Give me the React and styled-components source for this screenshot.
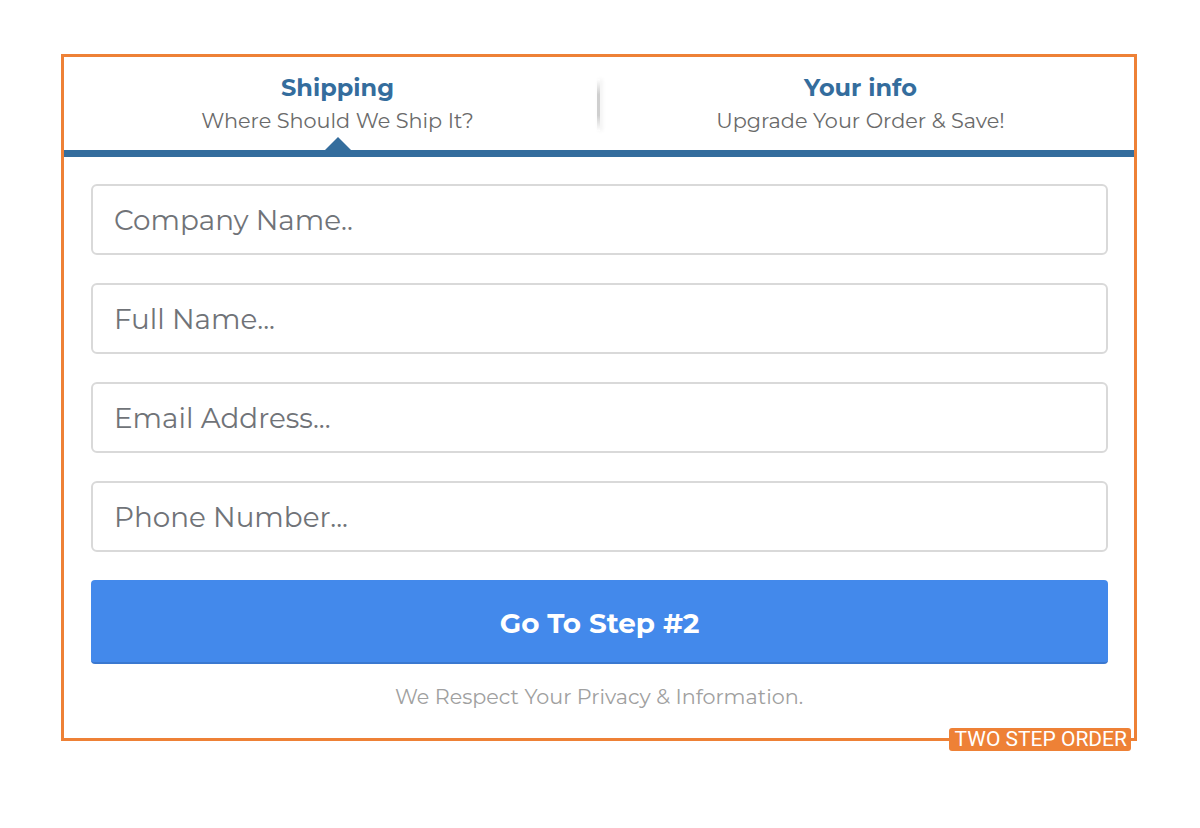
import React from 'react';
import styled, { createGlobalStyle } from 'styled-components';

const GlobalStyle = createGlobalStyle`
    html, body {
        margin: 0;
        padding: 0;
        background: #ffffff;
    }
    body {
        font-family: 'Montserrat', 'DejaVu Sans', 'Noto Sans', sans-serif;
    }
`;

const Page = styled.div`
    width: 1200px;
    height: 828px;
    padding: 54px 0 0 61px;
    box-sizing: border-box;
`;

const Frame = styled.div`
    position: relative;
    width: 1076px;
    height: 687px;
    box-sizing: border-box;
    border: 3px solid #ee8136;
    background: #fff;
`;

const Tag = styled.div`
    position: absolute;
    right: 3px;
    bottom: -13px;
    background: #ee8136;
    color: #fff;
    font-family: Roboto, 'Liberation Sans', sans-serif;
    font-size: 21px;
    line-height: 23px;
    padding: 0 4px 0 6px;
    border-radius: 3px;
`;

const Tabs = styled.div`
    display: grid;
    grid-template-columns: 1fr 1fr;
    padding: 0 12px;
    height: 93px;
    border-bottom: 7px solid #346d9d;
    position: relative;
`;

const Tab = styled.div`
    position: relative;
    display: flex;
    flex-direction: column;
    align-items: center;
    padding-top: 15px;

    ${props => props.divider && `
        &::before {
            content: '';
            position: absolute;
            left: -2px;
            top: 22px;
            width: 3px;
            height: 52px;
            background: linear-gradient(to bottom, rgba(200,200,200,0) 0%, #cfcfcf 30%, #cfcfcf 70%, rgba(200,200,200,0) 100%);
            box-shadow: 2px 0 4px rgba(0, 0, 0, 0.08);
        }
    `}

    ${props => props.active && `
        &::after {
            content: '';
            position: absolute;
            left: 50%;
            bottom: 0;
            margin-left: -13px;
            border-left: 13px solid transparent;
            border-right: 13px solid transparent;
            border-bottom: 13px solid #346d9d;
        }
    `}
`;

const TabTitle = styled.div`
    color: #346d9d;
    font-weight: 700;
    font-size: 24px;
    line-height: 32px;
`;

const TabSub = styled.div`
    color: #6a6a6a;
    font-size: 20.8px;
    line-height: 34px;
`;

const Body = styled.div`
    padding: 27px 26px 0 27px;
    display: flex;
    flex-direction: column;
    gap: 28px;
`;

const Field = styled.input`
    height: 71px;
    box-sizing: border-box;
    width: 100%;
    border: 2px solid #d9d9d9;
    border-radius: 6px;
    padding: 0 21px;
    font-family: inherit;
    font-size: 27.8px;
    color: #333;
    outline: none;

    &::placeholder {
        color: #707378;
    }
`;

const Button = styled.button`
    height: 84px;
    padding-top: 5px;
    border: none;
    border-bottom: 2px solid #3a78d0;
    border-radius: 4px;
    background: #4389eb;
    color: #fff;
    font-family: inherit;
    font-weight: 700;
    font-size: 27.8px;
    cursor: pointer;
`;

const Note = styled.div`
    margin-top: 20px;
    text-align: center;
    color: #a0a0a0;
    font-size: 20.7px;
`;

const fields = ['Company Name..', 'Full Name...', 'Email Address...', 'Phone Number...'];

function App() {
    return (
        <Page>
            <GlobalStyle />
            <Frame>
                <Tabs>
                    <Tab active>
                        <TabTitle>Shipping</TabTitle>
                        <TabSub>Where Should We Ship It?</TabSub>
                    </Tab>
                    <Tab divider>
                        <TabTitle>Your info</TabTitle>
                        <TabSub>Upgrade Your Order &amp; Save!</TabSub>
                    </Tab>
                </Tabs>
                <Body>
                    {fields.map(f => (
                        <Field key={f} placeholder={f} />
                    ))}
                    <Button>Go To Step #2</Button>
                </Body>
                <Note>We Respect Your Privacy &amp; Information.</Note>
                <Tag>TWO STEP ORDER</Tag>
            </Frame>
        </Page>
    );
}

export default App;
